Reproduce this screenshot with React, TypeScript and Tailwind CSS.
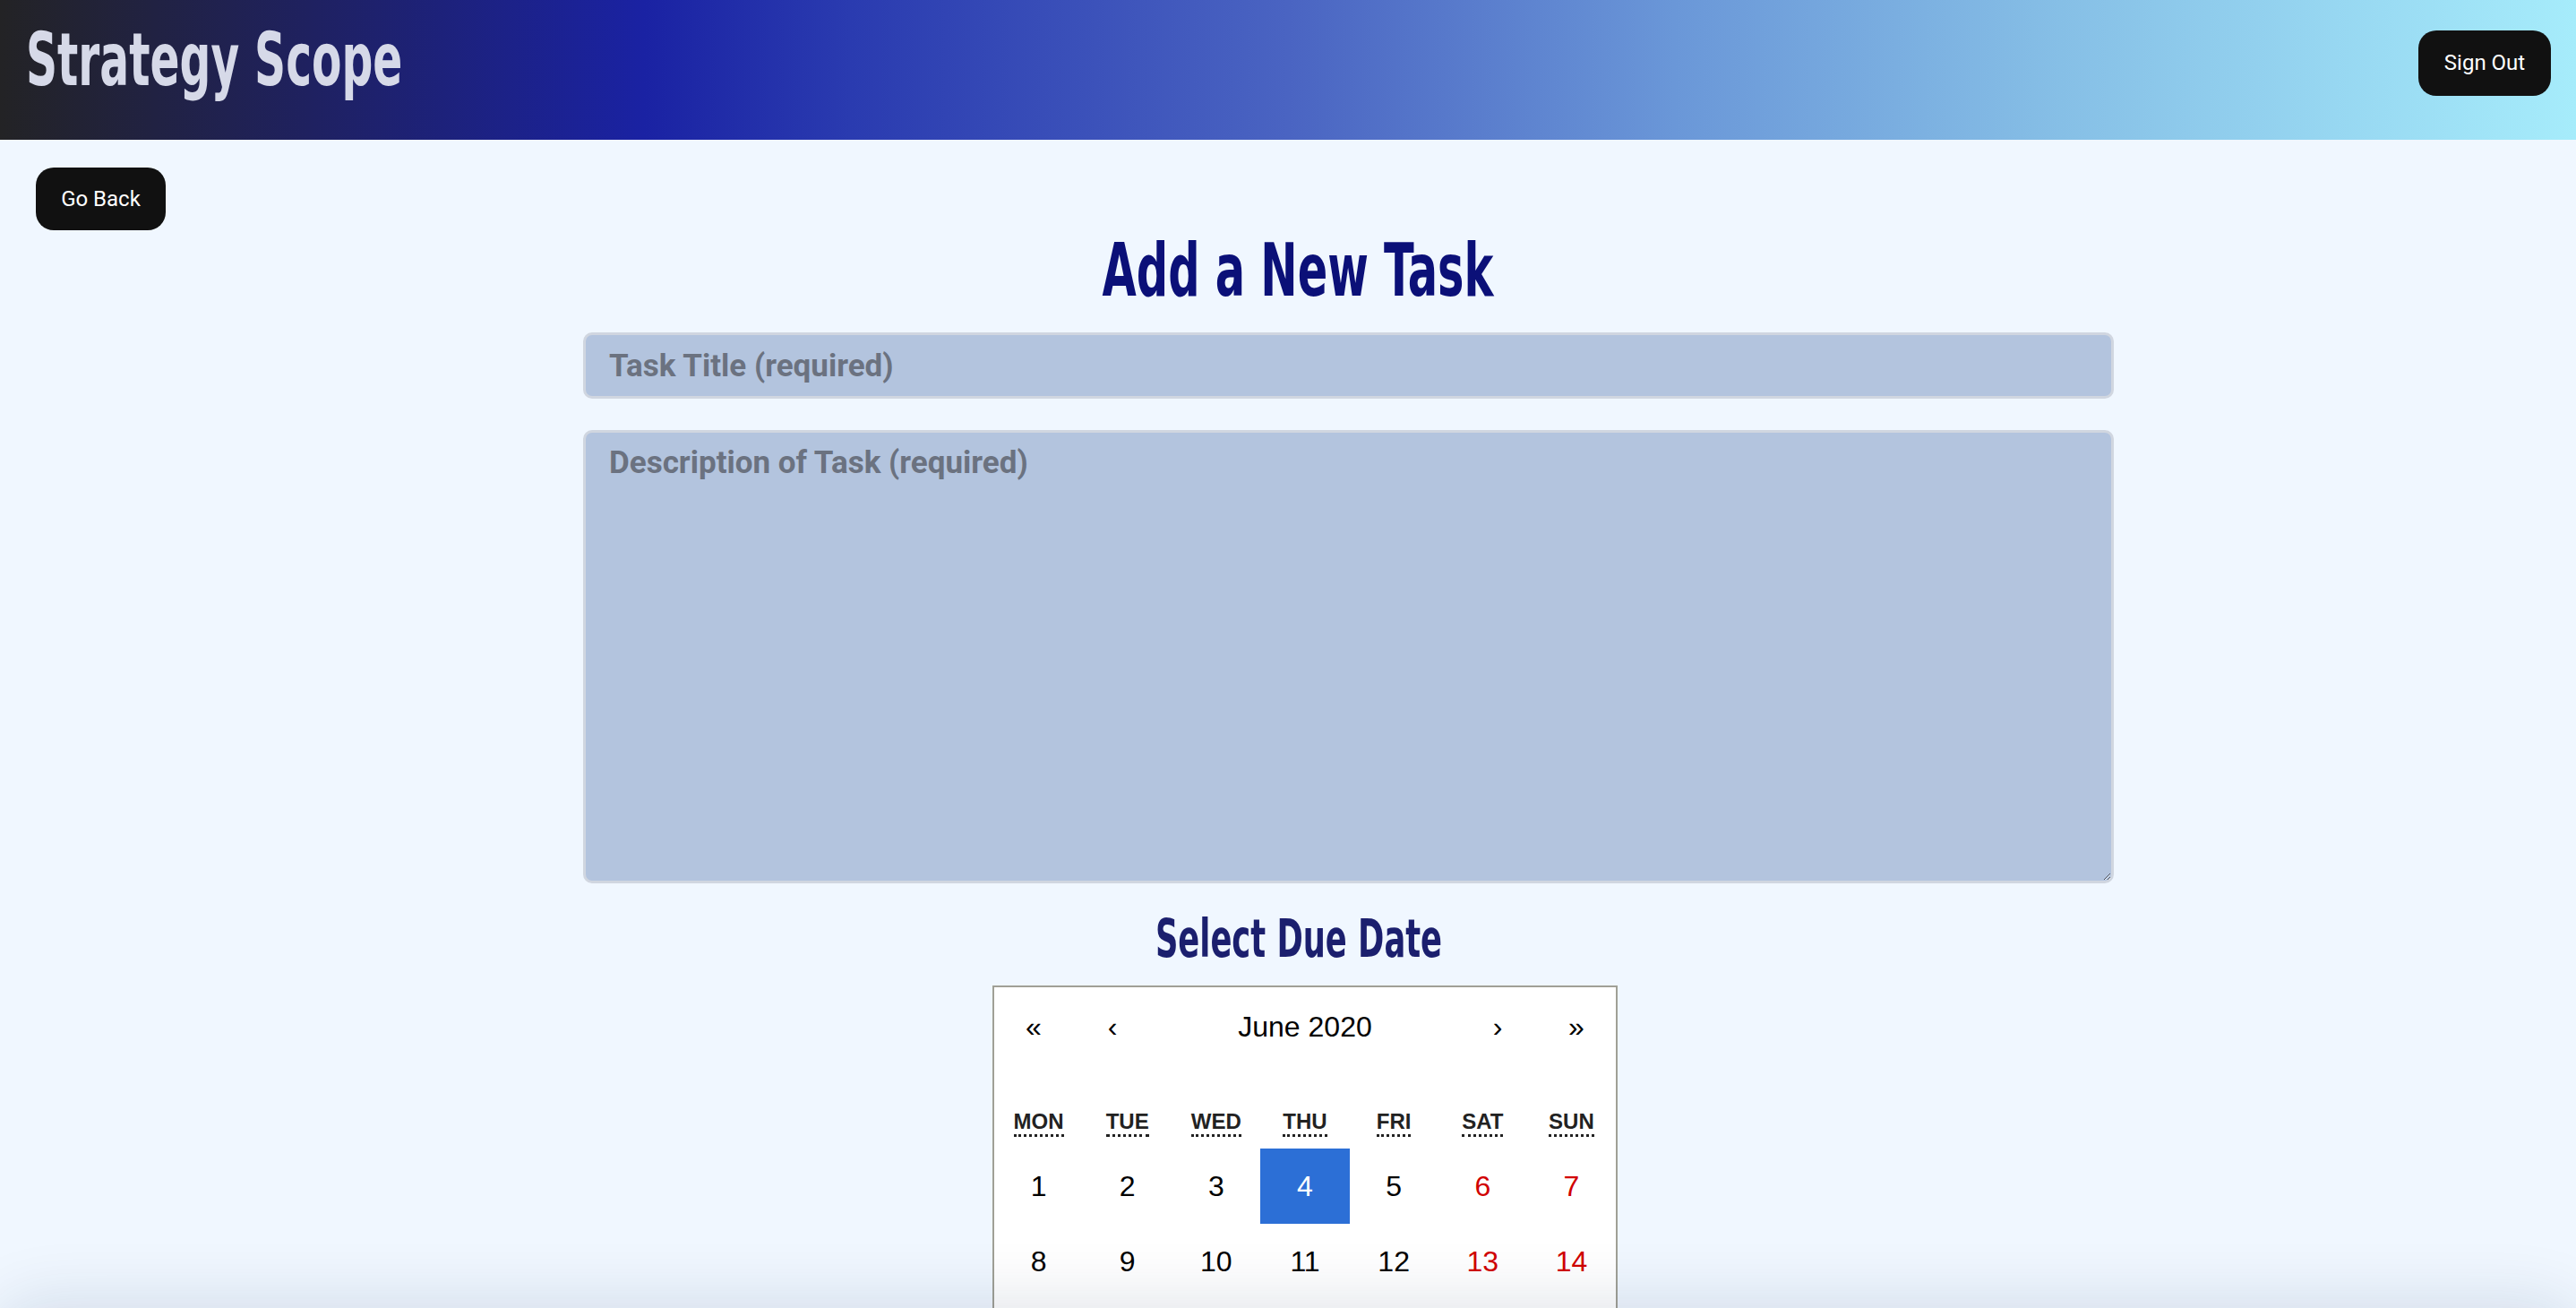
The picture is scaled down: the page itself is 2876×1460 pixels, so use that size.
import { useState } from "react";

const WEEKDAYS = [
  { short: "MON", long: "Monday" },
  { short: "TUE", long: "Tuesday" },
  { short: "WED", long: "Wednesday" },
  { short: "THU", long: "Thursday" },
  { short: "FRI", long: "Friday" },
  { short: "SAT", long: "Saturday" },
  { short: "SUN", long: "Sunday" },
];

type Tile = {
  day: number;
  current: boolean;
};

// June 2020 starts on a Monday, so no leading tiles are needed
const buildTiles = (): Tile[] => {
  const tiles: Tile[] = [];
  for (let d = 1; d <= 30; d++) tiles.push({ day: d, current: true });
  for (let d = 1; d <= 5; d++) tiles.push({ day: d, current: false });
  return tiles;
};

const headingFont = { fontFamily: '"Liberation Sans Narrow", "DejaVu Sans Condensed", "Liberation Sans", sans-serif' };

const Calendar = () => {
  const [selected, setSelected] = useState(4);
  const tiles = buildTiles();

  return (
    <div className="w-[698px] border-2 border-[#a0a096] bg-white font-['Liberation_Sans',Arial,sans-serif] leading-[1.125em]">
      {/* Navigation */}
      <div className="flex h-[88px] mb-[32px] text-[32px] text-black">
        <button className="min-w-[88px] flex items-center justify-center">«</button>
        <button className="min-w-[88px] flex items-center justify-center">‹</button>
        <button className="flex-1 flex items-center justify-center">June 2020</button>
        <button className="min-w-[88px] flex items-center justify-center">›</button>
        <button className="min-w-[88px] flex items-center justify-center">»</button>
      </div>

      {/* Weekday labels */}
      <div className="grid grid-cols-7 text-center text-[24px] font-bold text-[#222]">
        {WEEKDAYS.map((w) => (
          <div key={w.short} className="py-[12px] leading-[36px]">
            <abbr title={w.long} className="no-underline border-b-[3px] border-dotted border-[#222] pb-[1px]">
              {w.short}
            </abbr>
          </div>
        ))}
      </div>

      {/* Day tiles */}
      <div className="grid grid-cols-7 text-center text-[32px]">
        {tiles.map((t, i) => {
          const weekend = i % 7 >= 5;
          const active = t.current && t.day === selected;
          let color = "text-black";
          if (!t.current) color = "text-[#757575]";
          else if (weekend) color = "text-[#d10000]";
          return (
            <button
              key={i}
              onClick={() => t.current && setSelected(t.day)}
              className={
                active
                  ? "h-[84px] flex items-center justify-center bg-[#2c6fd6] text-white"
                  : `h-[84px] flex items-center justify-center ${color}`
              }
            >
              {t.day}
            </button>
          );
        })}
      </div>
    </div>
  );
};

const App = () => {
  return (
    <div className="min-h-screen bg-[#f0f7ff] font-['Roboto',sans-serif]">
      {/* Header */}
      <header className="h-[156px] flex items-center justify-between pl-[29px] pr-[28px] pb-[16px] bg-[linear-gradient(90deg,#232325_0%,#1f2160_12%,#1a22a3_25%,#2a3bb0_33%,#4a64c2_50%,#6a97d8_65%,#86bfe6_80%,#a6ecfb_100%)]">
        <h1
          style={headingFont}
          className="mb-[6px] text-[82px] font-bold text-[#d6d9e8] leading-none origin-left scale-x-[0.66] whitespace-nowrap"
        >
          Strategy Scope
        </h1>
        <button className="w-[148px] h-[73px] rounded-[20px] bg-[#111] text-white text-[24px]">Sign Out</button>
      </header>

      <main className="pt-[31px] pb-[80px]">
        <div className="pl-[40px]">
          <button className="w-[145px] h-[70px] rounded-[20px] bg-[#111] text-white text-[24px]">Go Back</button>
        </div>

        <h2
          style={headingFont}
          className="-mt-[5px] text-center text-[82px] font-bold text-[#0b1078] leading-[100px] scale-x-[0.67] translate-x-[11px]"
        >
          Add a New Task
        </h2>

        <div className="ml-[651px] w-[1709px] mt-[19px] flex flex-col gap-[35px]">
          <input
            type="text"
            placeholder="Task Title (required)"
            className="h-[74px] w-full rounded-[10px] border-[3px] border-[#d0d6e0] bg-[#b3c4de] px-[26px] text-[35px] font-bold text-[#333] placeholder:text-[#6b7280] outline-none"
          />
          <textarea
            placeholder="Description of Task (required)"
            className="h-[506px] w-full rounded-[10px] border-[3px] border-[#d0d6e0] bg-[#b3c4de] px-[26px] pt-[8px] pb-[18px] text-[35px] font-bold text-[#333] placeholder:text-[#6b7280] outline-none"
          />
        </div>

        <h3
          style={headingFont}
          className="mt-[22px] text-center text-[59px] font-bold text-[#1b1f6e] leading-[80px] scale-x-[0.665] translate-x-[12px]"
        >
          Select Due Date
        </h3>

        <div className="mt-[12px] flex justify-center pl-[38px]">
          <Calendar />
        </div>
      </main>

      {/* soft shadow from the window edge below */}
      <div className="fixed left-0 right-0 -bottom-[100px] h-[100px] rounded-[48px] shadow-[0_0_70px_10px_rgba(20,40,80,0.12)] pointer-events-none" />
    </div>
  );
};

export default App;
